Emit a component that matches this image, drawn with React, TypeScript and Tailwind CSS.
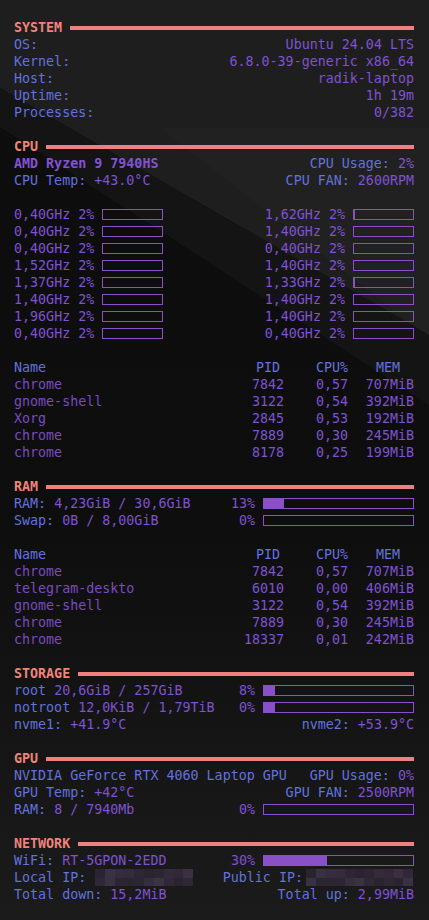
import React from 'react';

const LABEL = 'text-[#6272de]';
const VALUE = 'text-[#7e52d2]';
const NAME = 'text-[#7a4bbf]';

const Line = ({ children, className = '' }: { children?: React.ReactNode; className?: string }) => (
    <div className={`h-[17px] leading-[17px] flex items-center whitespace-pre ${className}`}>{children}</div>
);

const Header = ({ title }: { title: string }) => (
    <Line className="gap-[8px]">
        <span className="font-bold text-[#f0837b]">{title}</span>
        <div className="flex-1 h-[4px] bg-[#f08080]" />
    </Line>
);

const Bar = ({ fill = 0, className = '' }: { fill?: number; className?: string }) => (
    <div className={`h-[11px] border border-[#8a50cc] ${className}`}>
        {fill > 0 && <div className="h-full bg-[#8a50c8]" style={{ width: fill }} />}
    </div>
);

const Pair = ({ label, value, right }: { label: string; value: string; right?: boolean }) => (
    <span className={right ? 'ml-auto' : ''}>
        <span className={LABEL}>{label}</span>
        <span className={VALUE}>{value}</span>
    </span>
);

const PercentRow = ({ label, value, pct, fill }: { label: string; value: string; pct: string; fill: number }) => (
    <Line>
        <div className="w-[241px] flex">
            <span className={LABEL}>{label}</span>
            <span className={VALUE}>{value}</span>
            <span className={`ml-auto ${VALUE}`}>{pct}</span>
        </div>
        <Bar fill={fill} className="ml-[8px] flex-1" />
    </Line>
);

const Blank = () => <div className="h-[17px]" />;

const coresLeft = ['0,40', '0,40', '0,40', '1,52', '1,37', '1,40', '1,96', '0,40'];
const coresRight = ['1,62', '1,40', '0,40', '1,40', '1,33', '1,40', '1,40', '0,40'];

const Core = ({ ghz, fill }: { ghz: string; fill: number }) => (
    <div className="flex items-center gap-[8px]">
        <span className={VALUE}>{ghz}GHz 2%</span>
        <Bar fill={fill} className="w-[61px]" />
    </div>
);

type Proc = [string, string, string, string];

const ProcTable = ({ rows }: { rows: Proc[] }) => (
    <>
        <Line className={LABEL}>
            <span className="w-[230px]">Name</span>
            <span className="w-[40px] text-right pr-[4px]">PID</span>
            <span className="w-[32px]" />
            <span className="w-[32px]">CPU%</span>
            <span className="flex-1 text-right pr-[14px]">MEM</span>
        </Line>
        {rows.map((r, i) => (
            <Line key={i}>
                <span className={`w-[230px] ${NAME}`}>{r[0]}</span>
                <span className={`w-[40px] text-right ${VALUE}`}>{r[1]}</span>
                <span className="w-[32px]" />
                <span className={`w-[32px] ${VALUE}`}>{r[2]}</span>
                <span className={`flex-1 text-right ${VALUE}`}>{r[3]}</span>
            </Line>
        ))}
    </>
);

const mosaic = [
    '#2a2430', '#342b3b', '#2c2532', '#3a3042', '#2b2431', '#362d3e', '#2a2330', '#3b3144', '#2d2634', '#332a3a',
    '#302838', '#2b2431', '#3c3246', '#2e2735', '#352c3d', '#2a2330', '#312938', '#3a3043', '#2c2533', '#302837',
];

const Blur = ({ cols, className = '' }: { cols: number; className?: string }) => (
    <div
        className={`grid h-[17px] ${className}`}
        style={{ gridTemplateColumns: `repeat(${cols}, 1fr)`, gridTemplateRows: 'repeat(2, 1fr)' }}
    >
        {Array.from({ length: cols * 2 }).map((_, i) => (
            <div key={i} style={{ background: mosaic[(i * 7) % mosaic.length] }} />
        ))}
    </div>
);

export default function App() {
    return (
        <div className="relative w-[429px] h-[920px] overflow-hidden bg-[#0d0d0d] font-['DejaVu_Sans_Mono',monospace] text-[13.33px]">
            <svg className="absolute inset-0" width="429" height="920" viewBox="0 0 429 920">
                <defs>
                    <linearGradient id="bottom" x1="0" y1="0" x2="0" y2="1">
                        <stop offset="0" stopColor="#0d0d0d" />
                        <stop offset="0.58" stopColor="#0e0e0e" />
                        <stop offset="1" stopColor="#1b1b1b" />
                    </linearGradient>
                </defs>
                <rect x="0" y="0" width="429" height="920" fill="url(#bottom)" />
                <polygon points="0,0 429,0 429,335 0,88" fill="#1e1e1e" />
                <polygon points="160,128 429,128 429,338" fill="#212121" />
                <polygon points="0,88 429,335 429,405 0,127" fill="#141414" />
            </svg>

            <div className="relative pt-[19px] pl-[14px] pr-[15px]">
                <Header title="SYSTEM" />
                <Line><Pair label="OS:" value="" /><span className={`ml-auto ${VALUE}`}>Ubuntu 24.04 LTS</span></Line>
                <Line><Pair label="Kernel:" value="" /><span className={`ml-auto ${VALUE}`}>6.8.0-39-generic x86_64</span></Line>
                <Line><Pair label="Host:" value="" /><span className={`ml-auto ${VALUE}`}>radik-laptop</span></Line>
                <Line><Pair label="Uptime:" value="" /><span className={`ml-auto ${VALUE}`}>1h 19m</span></Line>
                <Line><Pair label="Processes:" value="" /><span className={`ml-auto ${VALUE}`}>0/382</span></Line>
                <Blank />

                <Header title="CPU" />
                <Line>
                    <span className="font-bold text-[#8152d4]">AMD Ryzen 9 7940HS</span>
                    <Pair label="CPU Usage: " value="2%" right />
                </Line>
                <Line>
                    <Pair label="CPU Temp: " value="+43.0°C" />
                    <Pair label="CPU FAN: " value="2600RPM" right />
                </Line>
                <Blank />
                {coresLeft.map((g, i) => (
                    <Line key={i} className="justify-between">
                        <Core ghz={g} fill={0} />
                        <Core ghz={coresRight[i]} fill={i === 0 || i === 4 ? 1 : 0} />
                    </Line>
                ))}
                <Blank />
                <ProcTable
                    rows={[
                        ['chrome', '7842', '0,57', '707MiB'],
                        ['gnome-shell', '3122', '0,54', '392MiB'],
                        ['Xorg', '2845', '0,53', '192MiB'],
                        ['chrome', '7889', '0,30', '245MiB'],
                        ['chrome', '8178', '0,25', '199MiB'],
                    ]}
                />
                <Blank />

                <Header title="RAM" />
                <PercentRow label="RAM: " value="4,23GiB / 30,6GiB" pct="13%" fill={20} />
                <PercentRow label="Swap: " value="0B / 8,00GiB" pct="0%" fill={0} />
                <Blank />
                <ProcTable
                    rows={[
                        ['chrome', '7842', '0,57', '707MiB'],
                        ['telegram-deskto', '6010', '0,00', '406MiB'],
                        ['gnome-shell', '3122', '0,54', '392MiB'],
                        ['chrome', '7889', '0,30', '245MiB'],
                        ['chrome', '18337', '0,01', '242MiB'],
                    ]}
                />
                <Blank />

                <Header title="STORAGE" />
                <PercentRow label="root " value="20,6GiB / 257GiB" pct="8%" fill={11} />
                <PercentRow label="notroot " value="12,0KiB / 1,79TiB" pct="0%" fill={11} />
                <Line>
                    <Pair label="nvme1: " value="+41.9°C" />
                    <Pair label="nvme2: " value="+53.9°C" right />
                </Line>
                <Blank />

                <Header title="GPU" />
                <Line>
                    <span className={LABEL}>NVIDIA GeForce RTX 4060 Laptop GPU</span>
                    <Pair label="GPU Usage: " value="0%" right />
                </Line>
                <Line>
                    <Pair label="GPU Temp: " value="+42°C" />
                    <Pair label="GPU FAN: " value="2500RPM" right />
                </Line>
                <PercentRow label="RAM: " value="8 / 7940Mb" pct="0%" fill={0} />
                <Blank />

                <Header title="NETWORK" />
                <PercentRow label="WiFi: " value="RT-5GPON-2EDD" pct="30%" fill={63} />
                <Line>
                    <span className={LABEL}>Local IP: </span>
                    <Blur cols={10} className="w-[98px] ml-[1px]" />
                    <span className={`ml-auto ${LABEL}`}>Public IP:</span>
                    <Blur cols={11} className="w-[107px] ml-[3px] mr-[1px]" />
                </Line>
                <Line>
                    <Pair label="Total down: " value="15,2MiB" />
                    <Pair label="Total up: " value="2,99MiB" right />
                </Line>
            </div>
        </div>
    );
}
